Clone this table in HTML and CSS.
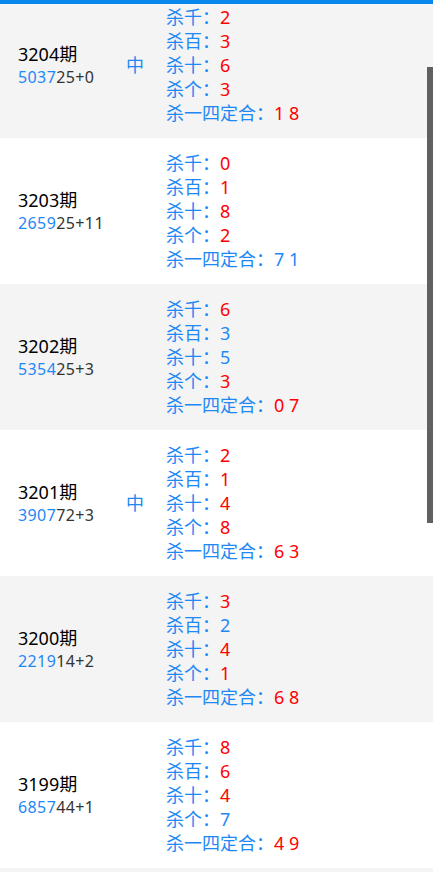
FILE: index.html
```html
<!DOCTYPE html>
<html lang="zh-CN">
<head>
  <meta charset="UTF-8">
  <meta name="viewport" content="width=device-width, initial-scale=1.0">
  <title>杀号记录</title>
  <link rel="stylesheet" href="styles.css">
</head>
<body>
  <div class="topbar"></div>
  <div class="scroll-thumb"></div>

  <div class="list">
    <div class="row">
      <div class="period">
        <div class="qi">3204期</div>
        <div class="code"><span class="hit">5037</span>25+0</div>
      </div>
      <div class="mark">中</div>
      <div class="kills">
        <p>杀千：<span class="r">2</span></p>
        <p>杀百：<span class="r">3</span></p>
        <p>杀十：<span class="r">6</span></p>
        <p>杀个：<span class="r">3</span></p>
        <p>杀一四定合：<span class="r">1 8</span></p>
      </div>
    </div>

    <div class="row">
      <div class="period">
        <div class="qi">3203期</div>
        <div class="code"><span class="hit">2659</span>25+11</div>
      </div>
      <div class="mark"></div>
      <div class="kills">
        <p>杀千：<span class="r">0</span></p>
        <p>杀百：<span class="r">1</span></p>
        <p>杀十：<span class="r">8</span></p>
        <p>杀个：<span class="r">2</span></p>
        <p>杀一四定合：<span class="b">7 1</span></p>
      </div>
    </div>

    <div class="row">
      <div class="period">
        <div class="qi">3202期</div>
        <div class="code"><span class="hit">5354</span>25+3</div>
      </div>
      <div class="mark"></div>
      <div class="kills">
        <p>杀千：<span class="r">6</span></p>
        <p>杀百：<span class="b">3</span></p>
        <p>杀十：<span class="b">5</span></p>
        <p>杀个：<span class="r">3</span></p>
        <p>杀一四定合：<span class="r">0 7</span></p>
      </div>
    </div>

    <div class="row">
      <div class="period">
        <div class="qi">3201期</div>
        <div class="code"><span class="hit">3907</span>72+3</div>
      </div>
      <div class="mark">中</div>
      <div class="kills">
        <p>杀千：<span class="r">2</span></p>
        <p>杀百：<span class="r">1</span></p>
        <p>杀十：<span class="r">4</span></p>
        <p>杀个：<span class="r">8</span></p>
        <p>杀一四定合：<span class="r">6 3</span></p>
      </div>
    </div>

    <div class="row">
      <div class="period">
        <div class="qi">3200期</div>
        <div class="code"><span class="hit">2219</span>14+2</div>
      </div>
      <div class="mark"></div>
      <div class="kills">
        <p>杀千：<span class="r">3</span></p>
        <p>杀百：<span class="b">2</span></p>
        <p>杀十：<span class="r">4</span></p>
        <p>杀个：<span class="r">1</span></p>
        <p>杀一四定合：<span class="r">6 8</span></p>
      </div>
    </div>

    <div class="row">
      <div class="period">
        <div class="qi">3199期</div>
        <div class="code"><span class="hit">6857</span>44+1</div>
      </div>
      <div class="mark"></div>
      <div class="kills">
        <p>杀千：<span class="r">8</span></p>
        <p>杀百：<span class="r">6</span></p>
        <p>杀十：<span class="r">4</span></p>
        <p>杀个：<span class="b">7</span></p>
        <p>杀一四定合：<span class="r">4 9</span></p>
      </div>
    </div>

    <div class="row"></div>
  </div>
</body>
</html>
```

FILE: styles.css
```css
html, body { margin: 0; padding: 0; height: 100%; overflow: hidden; }
body { font-family: "Noto Sans", "Noto Sans CJK SC", sans-serif; background: #fff; color: #000; }

.topbar { position: relative; z-index: 2; height: 4px; background: #0a86ef; }
.scroll-thumb { position: absolute; z-index: 3; top: 67px; right: 0; width: 6px; height: 456px; background: #606060; }

.list { margin-top: -12px; }
.row { display: flex; align-items: center; height: 120px; padding: 13px 0 13px 18px; background: #fff; }
.row:nth-child(odd) { background: #f4f4f4; }

.period { width: 108px; }
.qi { font-size: 18px; line-height: 24px; color: #000; }
.code { font-size: 16px; line-height: 22px; letter-spacing: 0.4px; color: #333; }
.code .hit { color: #1e88f5; }

.mark { width: 40px; font-size: 18px; line-height: 24px; color: #1e88f5; }

.kills p { margin: 0; font-size: 18px; line-height: 24px; color: #1e88f5; }
.kills .r { color: #ff0000; }
.kills .b { color: #1e88f5; }
```
